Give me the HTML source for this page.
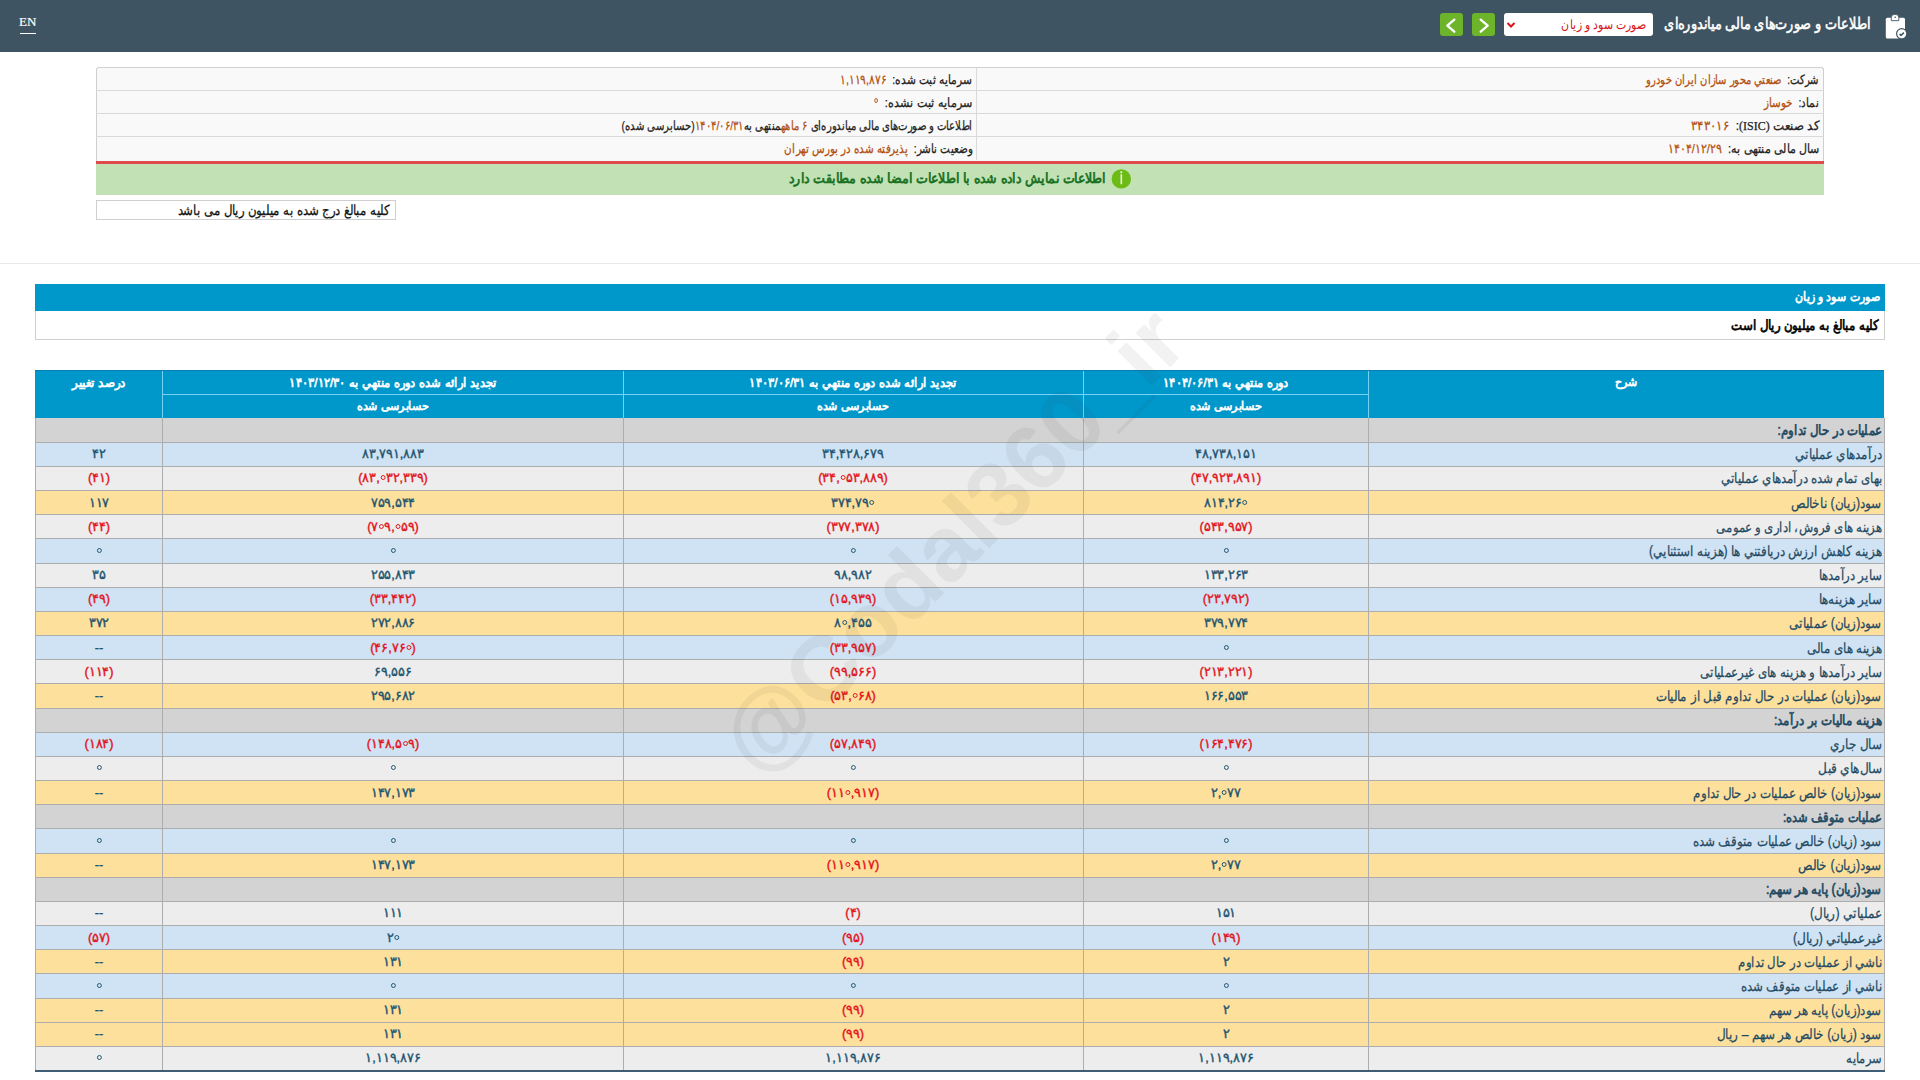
<!DOCTYPE html>
<html lang="fa"><head><meta charset="utf-8"><title>Codal</title>
<style>
html,body{margin:0;padding:0;}
body{width:1920px;height:1080px;position:relative;overflow:hidden;background:#fff;font-family:"Liberation Sans",sans-serif;}
.a{position:absolute;box-sizing:border-box;}
.t{position:absolute;white-space:nowrap;direction:rtl;}
.bd{-webkit-text-stroke:0.7px currentColor;}
.rg{-webkit-text-stroke:0.25px currentColor;}
.o{color:#b3500f;}
.nm{-webkit-text-stroke:0.4px currentColor;direction:ltr;}
.z{display:inline-block;width:5px;height:5px;box-sizing:border-box;border:1.9px solid currentColor;border-radius:50%;vertical-align:middle;position:relative;top:-1px;margin:0 0.6px;}
</style></head><body>

<div class="a" style="left:0;top:0;width:1920px;height:52px;background:#3e5462"></div>
<div class="a" style="left:19px;top:14px;font-family:'Liberation Serif',serif;font-size:13px;color:#fff;line-height:16px;-webkit-text-stroke:0.2px #fff">EN</div>
<div class="a" style="left:20px;top:33px;width:16px;height:1px;background:#fff"></div>
<svg class="a" style="left:1880px;top:10px" width="30" height="32" viewBox="0 0 30 32">
<rect x="5.8" y="7.7" width="19.2" height="20.8" rx="1.5" fill="#fff"/>
<path d="M11.3 10.7 V7.3 A3.75 3 0 0 1 18.8 7.3 V10.7 Z" fill="#fff" stroke="#3e5462" stroke-width="0.9"/>
<circle cx="15.2" cy="7.2" r="0.8" fill="#3e5462"/>
<circle cx="21.7" cy="23.7" r="5.7" fill="#3e5462"/>
<circle cx="21.7" cy="23.7" r="4.5" fill="#fff"/>
<path d="M19.6 24.0 L21.0 25.4 L23.9 22.6" stroke="#3e5462" stroke-width="1.5" fill="none"/>
</svg>
<div class="t bd" id="f1" style="right:50px;top:14px;height:20px;line-height:20px;font-size:15.6px;color:#fff;transform:scaleX(0.8008);transform-origin:100% 50%;-webkit-text-stroke:0.6px #fff;">اطلاعات و صورت‌های مالی میاندوره‌ای</div>
<div class="a" style="left:1504px;top:13px;width:149px;height:23px;background:#fff;border-radius:3px"></div>
<div class="t " id="f2" style="right:274px;top:14px;height:21px;line-height:21px;font-size:13.2px;color:#d7141a;transform:scaleX(0.8373);transform-origin:100% 50%;">صورت سود و زیان</div>
<svg class="a" style="left:1506px;top:19.5px" width="10" height="10" viewBox="0 0 10 10"><path d="M1.5 3 L5 6.5 L8.5 3" stroke="#d7141a" stroke-width="2" fill="none"/></svg>
<div class="a" style="left:1440px;top:13px;width:23px;height:23px;background:#6db42a;border-radius:3px"></div>
<svg class="a" style="left:1440px;top:13px" width="23" height="23" viewBox="0 0 23 23"><path d="M14.3 6.6 L7.3 12.6 L14.3 18.7" stroke="#fff" stroke-width="2.3" fill="none" stroke-linecap="round" stroke-linejoin="round"/></svg>
<div class="a" style="left:1472px;top:13px;width:23px;height:23px;background:#6db42a;border-radius:3px"></div>
<svg class="a" style="left:1472px;top:13px" width="23" height="23" viewBox="0 0 23 23"><path d="M8.7 6.6 L15.7 12.6 L8.7 18.7" stroke="#fff" stroke-width="2.3" fill="none" stroke-linecap="round" stroke-linejoin="round"/></svg>
<div class="a" style="left:96px;top:67px;width:1728px;height:94px;background:#f9f9f9;border:1px solid #cfcfcf;border-bottom:none;border-radius:3px 3px 0 0"></div>
<div class="a" style="left:96px;top:90px;width:1728px;height:1px;background:#d9d9d9"></div>
<div class="a" style="left:96px;top:113px;width:1728px;height:1px;background:#d9d9d9"></div>
<div class="a" style="left:96px;top:136px;width:1728px;height:1px;background:#d9d9d9"></div>
<div class="a" style="left:976px;top:67px;width:1px;height:93px;background:#d9d9d9"></div>
<div class="a" style="left:96px;top:161px;width:1728px;height:3px;background:#e04a4a"></div>
<div class="a" style="left:96px;top:164px;width:1728px;height:31px;background:#c2e2b6"></div>
<div class="t rg" id="f3" style="right:101px;top:69px;height:22px;line-height:22px;font-size:13.2px;color:#222;transform:scaleX(0.7699);transform-origin:100% 50%;">شرکت:&nbsp; <span class="o">صنعتي محور سازان ايران خودرو</span></div>
<div class="t rg" id="f4" style="right:101px;top:92px;height:22px;line-height:22px;font-size:13.2px;color:#222;transform:scaleX(0.8000);transform-origin:100% 50%;">نماد:&nbsp; <span class="o">خوساز</span></div>
<div class="t rg" id="f5" style="right:101px;top:115px;height:22px;line-height:22px;font-size:13.2px;color:#222;transform:scaleX(0.9078);transform-origin:100% 50%;">کد صنعت <span style="font-family:'Liberation Serif',serif">(ISIC)</span>:&nbsp; <span class="o">۳۴۳۰۱۶</span></div>
<div class="t rg" id="f6" style="right:101px;top:138px;height:22px;line-height:22px;font-size:13.2px;color:#222;transform:scaleX(0.8481);transform-origin:100% 50%;">سال مالی منتهی به:&nbsp; <span class="o">۱۴۰۴/۱۲/۲۹</span></div>
<div class="t rg" id="f7" style="right:948px;top:69px;height:22px;line-height:22px;font-size:13.2px;color:#222;transform:scaleX(0.8184);transform-origin:100% 50%;">سرمایه ثبت شده:&nbsp; <span class="o">۱,۱۱۹,۸۷۶</span></div>
<div class="t rg" id="f8" style="right:948px;top:92px;height:22px;line-height:22px;font-size:13.2px;color:#222;transform:scaleX(0.8563);transform-origin:100% 50%;">سرمایه ثبت نشده:&nbsp; <span class="o"><span class="z" style="width:4.6px;height:4.6px;border-width:1.2px;top:-3px"></span></span></div>
<div class="t rg" id="f9" style="right:948px;top:115px;height:22px;line-height:22px;font-size:13.2px;color:#222;transform:scaleX(0.7758);transform-origin:100% 50%;">اطلاعات و صورت‌های مالی میاندوره‌ای <span class="o">۶ ماهه</span>منتهی به<span class="o">۱۴۰۴/۰۶/۳۱</span>(حسابرسی شده)</div>
<div class="t rg" id="f10" style="right:948px;top:138px;height:22px;line-height:22px;font-size:13.2px;color:#222;transform:scaleX(0.7983);transform-origin:100% 50%;">وضعیت ناشر:&nbsp; <span class="o">پذیرفته شده در بورس تهران</span></div>
<div class="t bd" id="f11" style="right:814px;top:167.5px;height:20px;line-height:20px;font-size:14.4px;color:#17701f;transform:scaleX(0.9006);transform-origin:100% 50%;">اطلاعات نمایش داده شده با اطلاعات امضا شده مطابقت دارد</div>
<svg class="a" style="left:1111px;top:168px" width="21" height="21" viewBox="0 0 21 21"><circle cx="10.3" cy="10.9" r="9.7" fill="#6cbb17"/><rect x="9.4" y="3.3" width="1.8" height="1.8" fill="#e8f8d8"/><rect x="9.5" y="6.2" width="1.6" height="10" fill="#e8f8d8"/></svg>
<div class="a" style="left:96px;top:200px;width:300px;height:20px;background:#fff;border:1px solid #cfcfcf"></div>
<div class="t rg" id="f12" style="right:1530px;top:201px;height:19px;line-height:19px;font-size:14.4px;color:#111;transform:scaleX(0.8399);transform-origin:100% 50%;">کلیه مبالغ درج شده به میلیون ریال می باشد</div>
<div class="a" style="left:0;top:263px;width:1920px;height:1px;background:#eaeaea"></div>
<div class="a" style="left:35px;top:284px;width:1850px;height:27px;background:#0097ca"></div>
<div class="t bd" id="f13" style="right:40px;top:287px;height:20px;line-height:20px;font-size:13.2px;color:#fff;transform:scaleX(0.8431);transform-origin:100% 50%;">صورت سود و زیان</div>
<div class="a" style="left:35px;top:311px;width:1850px;height:29px;background:#fff;border:1px solid #cfcfcf;border-top:none"></div>
<div class="t bd" id="f14" style="right:41px;top:315px;height:20px;line-height:20px;font-size:14.4px;color:#000;transform:scaleX(0.8409);transform-origin:100% 50%;">کليه مبالغ به ميليون ريال است</div>
<div class="a" style="left:35px;top:370px;width:1849px;height:48px;background:#0097ca;border-top:1px solid #0a7fae"></div>
<div class="a" style="left:162px;top:371px;width:1px;height:47px;background:#74d3f3"></div>
<div class="a" style="left:623px;top:371px;width:1px;height:47px;background:#74d3f3"></div>
<div class="a" style="left:1083px;top:371px;width:1px;height:47px;background:#74d3f3"></div>
<div class="a" style="left:1368px;top:371px;width:1px;height:47px;background:#74d3f3"></div>
<div class="a" style="left:162px;top:394px;width:1206px;height:1px;background:#74d3f3"></div>
<div class="t bd" id="f15" style="left:1626.0px;top:371px;height:23px;line-height:23px;font-size:12.1px;color:#fff;transform:translateX(-50%) scaleX(0.9200);transform-origin:50% 50%;">شرح</div>
<div class="t bd" id="f16" style="left:1225.5px;top:371px;height:23px;line-height:23px;font-size:13.2px;color:#fff;transform:translateX(-50%) scaleX(0.8819);transform-origin:50% 50%;">دوره منتهي به ۱۴۰۴/۰۶/۳۱</div>
<div class="t bd" id="f17" style="left:853.0px;top:371px;height:23px;line-height:23px;font-size:13.2px;color:#fff;transform:translateX(-50%) scaleX(0.8877);transform-origin:50% 50%;">تجدید ارائه شده دوره منتهي به ۱۴۰۳/۰۶/۳۱</div>
<div class="t bd" id="f18" style="left:392.5px;top:371px;height:23px;line-height:23px;font-size:13.2px;color:#fff;transform:translateX(-50%) scaleX(0.8881);transform-origin:50% 50%;">تجدید ارائه شده دوره منتهي به ۱۴۰۳/۱۲/۳۰</div>
<div class="t bd" id="f19" style="left:98.5px;top:371px;height:23px;line-height:23px;font-size:13.2px;color:#fff;transform:translateX(-50%) scaleX(0.9153);transform-origin:50% 50%;">درصد تغییر</div>
<div class="t bd" id="f20" style="left:392.5px;top:395px;height:23px;line-height:23px;font-size:12.1px;color:#fff;transform:translateX(-50%) scaleX(0.9286);transform-origin:50% 50%;">حسابرسی شده</div>
<div class="t bd" id="f21" style="left:853.0px;top:395px;height:23px;line-height:23px;font-size:12.1px;color:#fff;transform:translateX(-50%) scaleX(0.9286);transform-origin:50% 50%;">حسابرسی شده</div>
<div class="t bd" id="f22" style="left:1225.5px;top:395px;height:23px;line-height:23px;font-size:12.1px;color:#fff;transform:translateX(-50%) scaleX(0.9286);transform-origin:50% 50%;">حسابرسی شده</div>
<div class="a" style="left:35px;top:418px;width:1849px;height:24px;background:#d3d3d3"></div>
<div class="a" style="left:35px;top:442px;width:1849px;height:24px;background:#d0e3f4"></div>
<div class="a" style="left:35px;top:466px;width:1849px;height:25px;background:#ededed"></div>
<div class="a" style="left:35px;top:491px;width:1849px;height:24px;background:#fde09c"></div>
<div class="a" style="left:35px;top:515px;width:1849px;height:24px;background:#ededed"></div>
<div class="a" style="left:35px;top:539px;width:1849px;height:24px;background:#d0e3f4"></div>
<div class="a" style="left:35px;top:563px;width:1849px;height:24px;background:#ededed"></div>
<div class="a" style="left:35px;top:587px;width:1849px;height:24px;background:#d0e3f4"></div>
<div class="a" style="left:35px;top:611px;width:1849px;height:25px;background:#fde09c"></div>
<div class="a" style="left:35px;top:636px;width:1849px;height:24px;background:#d0e3f4"></div>
<div class="a" style="left:35px;top:660px;width:1849px;height:24px;background:#ededed"></div>
<div class="a" style="left:35px;top:684px;width:1849px;height:24px;background:#fde09c"></div>
<div class="a" style="left:35px;top:708px;width:1849px;height:24px;background:#d3d3d3"></div>
<div class="a" style="left:35px;top:732px;width:1849px;height:24px;background:#d0e3f4"></div>
<div class="a" style="left:35px;top:756px;width:1849px;height:25px;background:#ededed"></div>
<div class="a" style="left:35px;top:781px;width:1849px;height:24px;background:#fde09c"></div>
<div class="a" style="left:35px;top:805px;width:1849px;height:24px;background:#d3d3d3"></div>
<div class="a" style="left:35px;top:829px;width:1849px;height:24px;background:#d0e3f4"></div>
<div class="a" style="left:35px;top:853px;width:1849px;height:24px;background:#fde09c"></div>
<div class="a" style="left:35px;top:877px;width:1849px;height:24px;background:#d3d3d3"></div>
<div class="a" style="left:35px;top:901px;width:1849px;height:25px;background:#ededed"></div>
<div class="a" style="left:35px;top:926px;width:1849px;height:24px;background:#d0e3f4"></div>
<div class="a" style="left:35px;top:950px;width:1849px;height:24px;background:#fde09c"></div>
<div class="a" style="left:35px;top:974px;width:1849px;height:24px;background:#d0e3f4"></div>
<div class="a" style="left:35px;top:998px;width:1849px;height:24px;background:#fde09c"></div>
<div class="a" style="left:35px;top:1022px;width:1849px;height:24px;background:#fde09c"></div>
<div class="a" style="left:35px;top:1046px;width:1849px;height:25px;background:#ededed"></div>
<div class="a" style="left:35px;top:442px;width:1849px;height:1px;background:#adadad"></div>
<div class="a" style="left:35px;top:466px;width:1849px;height:1px;background:#adadad"></div>
<div class="a" style="left:35px;top:490px;width:1849px;height:1px;background:#adadad"></div>
<div class="a" style="left:35px;top:514px;width:1849px;height:1px;background:#adadad"></div>
<div class="a" style="left:35px;top:538px;width:1849px;height:1px;background:#adadad"></div>
<div class="a" style="left:35px;top:563px;width:1849px;height:1px;background:#adadad"></div>
<div class="a" style="left:35px;top:587px;width:1849px;height:1px;background:#adadad"></div>
<div class="a" style="left:35px;top:611px;width:1849px;height:1px;background:#adadad"></div>
<div class="a" style="left:35px;top:635px;width:1849px;height:1px;background:#adadad"></div>
<div class="a" style="left:35px;top:659px;width:1849px;height:1px;background:#adadad"></div>
<div class="a" style="left:35px;top:683px;width:1849px;height:1px;background:#adadad"></div>
<div class="a" style="left:35px;top:708px;width:1849px;height:1px;background:#adadad"></div>
<div class="a" style="left:35px;top:732px;width:1849px;height:1px;background:#adadad"></div>
<div class="a" style="left:35px;top:756px;width:1849px;height:1px;background:#adadad"></div>
<div class="a" style="left:35px;top:780px;width:1849px;height:1px;background:#adadad"></div>
<div class="a" style="left:35px;top:804px;width:1849px;height:1px;background:#adadad"></div>
<div class="a" style="left:35px;top:828px;width:1849px;height:1px;background:#adadad"></div>
<div class="a" style="left:35px;top:853px;width:1849px;height:1px;background:#adadad"></div>
<div class="a" style="left:35px;top:877px;width:1849px;height:1px;background:#adadad"></div>
<div class="a" style="left:35px;top:901px;width:1849px;height:1px;background:#adadad"></div>
<div class="a" style="left:35px;top:925px;width:1849px;height:1px;background:#adadad"></div>
<div class="a" style="left:35px;top:949px;width:1849px;height:1px;background:#adadad"></div>
<div class="a" style="left:35px;top:973px;width:1849px;height:1px;background:#adadad"></div>
<div class="a" style="left:35px;top:998px;width:1849px;height:1px;background:#adadad"></div>
<div class="a" style="left:35px;top:1022px;width:1849px;height:1px;background:#adadad"></div>
<div class="a" style="left:35px;top:1046px;width:1849px;height:1px;background:#adadad"></div>
<div class="a" style="left:35px;top:418px;width:1px;height:652px;background:#adadad"></div>
<div class="a" style="left:162px;top:418px;width:1px;height:652px;background:#adadad"></div>
<div class="a" style="left:623px;top:418px;width:1px;height:652px;background:#adadad"></div>
<div class="a" style="left:1083px;top:418px;width:1px;height:652px;background:#adadad"></div>
<div class="a" style="left:1368px;top:418px;width:1px;height:652px;background:#adadad"></div>
<div class="a" style="left:1884px;top:418px;width:1px;height:652px;background:#adadad"></div>
<div class="a" style="left:35px;top:1069.5px;width:1850px;height:2px;background:#3f5d74"></div>
<div class="t bd" id="f23" style="right:38px;top:418.0px;height:24.17px;line-height:24.17px;font-size:14.4px;color:#1f4a63;transform:scaleX(0.8360);transform-origin:100% 50%;">عمليات در حال تداوم:</div>
<div class="t rg" id="f24" style="right:38px;top:442.17px;height:24.17px;line-height:24.17px;font-size:14.4px;color:#1f4a63;transform:scaleX(0.8447);transform-origin:100% 50%;">درآمدهاي عملياتي</div>
<div class="t nm" id="f25" style="left:1225.5px;top:442.17px;height:24.17px;line-height:24.17px;font-size:13.0px;color:#1d5470;transform:translateX(-50%) scaleX(0.9800);transform-origin:50% 50%;">۴۸,۷۳۸,۱۵۱</div>
<div class="t nm" id="f26" style="left:853.0px;top:442.17px;height:24.17px;line-height:24.17px;font-size:13.0px;color:#1d5470;transform:translateX(-50%) scaleX(0.9800);transform-origin:50% 50%;">۳۴,۴۲۸,۶۷۹</div>
<div class="t nm" id="f27" style="left:392.5px;top:442.17px;height:24.17px;line-height:24.17px;font-size:13.0px;color:#1d5470;transform:translateX(-50%) scaleX(0.9800);transform-origin:50% 50%;">۸۳,۷۹۱,۸۸۳</div>
<div class="t nm" id="f28" style="left:98.5px;top:442.17px;height:24.17px;line-height:24.17px;font-size:13.0px;color:#1d5470;transform:translateX(-50%) scaleX(0.9800);transform-origin:50% 50%;">۴۲</div>
<div class="t rg" id="f29" style="right:38px;top:466.34px;height:24.17px;line-height:24.17px;font-size:14.4px;color:#1f4a63;transform:scaleX(0.8429);transform-origin:100% 50%;">بهاى تمام شده درآمدهاي عملياتي</div>
<div class="t nm" id="f30" style="left:1225.5px;top:466.34px;height:24.17px;line-height:24.17px;font-size:13.0px;color:#e3141b;transform:translateX(-50%) scaleX(0.9800);transform-origin:50% 50%;">(۴۷,۹۲۳,۸۹۱)</div>
<div class="t nm" id="f31" style="left:853.0px;top:466.34px;height:24.17px;line-height:24.17px;font-size:13.0px;color:#e3141b;transform:translateX(-50%) scaleX(0.9800);transform-origin:50% 50%;">(۳۴,<span class="z"></span>۵۳,۸۸۹)</div>
<div class="t nm" id="f32" style="left:392.5px;top:466.34px;height:24.17px;line-height:24.17px;font-size:13.0px;color:#e3141b;transform:translateX(-50%) scaleX(0.9800);transform-origin:50% 50%;">(۸۳,<span class="z"></span>۳۲,۳۳۹)</div>
<div class="t nm" id="f33" style="left:98.5px;top:466.34px;height:24.17px;line-height:24.17px;font-size:13.0px;color:#e3141b;transform:translateX(-50%) scaleX(0.9800);transform-origin:50% 50%;">(۴۱)</div>
<div class="t rg" id="f34" style="right:38px;top:490.51px;height:24.17px;line-height:24.17px;font-size:14.4px;color:#1f4a63;transform:scaleX(0.8585);transform-origin:100% 50%;">سود(زيان) ناخالص</div>
<div class="t nm" id="f35" style="left:1225.5px;top:490.51px;height:24.17px;line-height:24.17px;font-size:13.0px;color:#1d5470;transform:translateX(-50%) scaleX(0.9800);transform-origin:50% 50%;">۸۱۴,۲۶<span class="z"></span></div>
<div class="t nm" id="f36" style="left:853.0px;top:490.51px;height:24.17px;line-height:24.17px;font-size:13.0px;color:#1d5470;transform:translateX(-50%) scaleX(0.9800);transform-origin:50% 50%;">۳۷۴,۷۹<span class="z"></span></div>
<div class="t nm" id="f37" style="left:392.5px;top:490.51px;height:24.17px;line-height:24.17px;font-size:13.0px;color:#1d5470;transform:translateX(-50%) scaleX(0.9800);transform-origin:50% 50%;">۷۵۹,۵۴۴</div>
<div class="t nm" id="f38" style="left:98.5px;top:490.51px;height:24.17px;line-height:24.17px;font-size:13.0px;color:#1d5470;transform:translateX(-50%) scaleX(0.9800);transform-origin:50% 50%;">۱۱۷</div>
<div class="t rg" id="f39" style="right:38px;top:514.68px;height:24.17px;line-height:24.17px;font-size:14.4px;color:#1f4a63;transform:scaleX(0.8342);transform-origin:100% 50%;">هزينه هاى فروش، ادارى و عمومى</div>
<div class="t nm" id="f40" style="left:1225.5px;top:514.68px;height:24.17px;line-height:24.17px;font-size:13.0px;color:#e3141b;transform:translateX(-50%) scaleX(0.9800);transform-origin:50% 50%;">(۵۴۳,۹۵۷)</div>
<div class="t nm" id="f41" style="left:853.0px;top:514.68px;height:24.17px;line-height:24.17px;font-size:13.0px;color:#e3141b;transform:translateX(-50%) scaleX(0.9800);transform-origin:50% 50%;">(۳۷۷,۳۷۸)</div>
<div class="t nm" id="f42" style="left:392.5px;top:514.68px;height:24.17px;line-height:24.17px;font-size:13.0px;color:#e3141b;transform:translateX(-50%) scaleX(0.9800);transform-origin:50% 50%;">(۷<span class="z"></span>۹,<span class="z"></span>۵۹)</div>
<div class="t nm" id="f43" style="left:98.5px;top:514.68px;height:24.17px;line-height:24.17px;font-size:13.0px;color:#e3141b;transform:translateX(-50%) scaleX(0.9800);transform-origin:50% 50%;">(۴۴)</div>
<div class="t rg" id="f44" style="right:38px;top:538.85px;height:24.17px;line-height:24.17px;font-size:14.4px;color:#1f4a63;transform:scaleX(0.8504);transform-origin:100% 50%;">هزينه کاهش ارزش دريافتني ها (هزينه استثنايي)</div>
<div class="t nm" id="f45" style="left:1225.5px;top:538.85px;height:24.17px;line-height:24.17px;font-size:13.0px;color:#1d5470;transform:translateX(-50%) scaleX(0.9800);transform-origin:50% 50%;"><span class="z"></span></div>
<div class="t nm" id="f46" style="left:853.0px;top:538.85px;height:24.17px;line-height:24.17px;font-size:13.0px;color:#1d5470;transform:translateX(-50%) scaleX(0.9800);transform-origin:50% 50%;"><span class="z"></span></div>
<div class="t nm" id="f47" style="left:392.5px;top:538.85px;height:24.17px;line-height:24.17px;font-size:13.0px;color:#1d5470;transform:translateX(-50%) scaleX(0.9800);transform-origin:50% 50%;"><span class="z"></span></div>
<div class="t nm" id="f48" style="left:98.5px;top:538.85px;height:24.17px;line-height:24.17px;font-size:13.0px;color:#1d5470;transform:translateX(-50%) scaleX(0.9800);transform-origin:50% 50%;"><span class="z"></span></div>
<div class="t rg" id="f49" style="right:38px;top:563.02px;height:24.17px;line-height:24.17px;font-size:14.4px;color:#1f4a63;transform:scaleX(0.8400);transform-origin:100% 50%;">ساير درآمدها</div>
<div class="t nm" id="f50" style="left:1225.5px;top:563.02px;height:24.17px;line-height:24.17px;font-size:13.0px;color:#1d5470;transform:translateX(-50%) scaleX(0.9800);transform-origin:50% 50%;">۱۳۳,۲۶۳</div>
<div class="t nm" id="f51" style="left:853.0px;top:563.02px;height:24.17px;line-height:24.17px;font-size:13.0px;color:#1d5470;transform:translateX(-50%) scaleX(0.9800);transform-origin:50% 50%;">۹۸,۹۸۲</div>
<div class="t nm" id="f52" style="left:392.5px;top:563.02px;height:24.17px;line-height:24.17px;font-size:13.0px;color:#1d5470;transform:translateX(-50%) scaleX(0.9800);transform-origin:50% 50%;">۲۵۵,۸۴۳</div>
<div class="t nm" id="f53" style="left:98.5px;top:563.02px;height:24.17px;line-height:24.17px;font-size:13.0px;color:#1d5470;transform:translateX(-50%) scaleX(0.9800);transform-origin:50% 50%;">۳۵</div>
<div class="t rg" id="f54" style="right:38px;top:587.19px;height:24.17px;line-height:24.17px;font-size:14.4px;color:#1f4a63;transform:scaleX(0.8514);transform-origin:100% 50%;">ساير هزينه‌ها</div>
<div class="t nm" id="f55" style="left:1225.5px;top:587.19px;height:24.17px;line-height:24.17px;font-size:13.0px;color:#e3141b;transform:translateX(-50%) scaleX(0.9800);transform-origin:50% 50%;">(۲۳,۷۹۲)</div>
<div class="t nm" id="f56" style="left:853.0px;top:587.19px;height:24.17px;line-height:24.17px;font-size:13.0px;color:#e3141b;transform:translateX(-50%) scaleX(0.9800);transform-origin:50% 50%;">(۱۵,۹۳۹)</div>
<div class="t nm" id="f57" style="left:392.5px;top:587.19px;height:24.17px;line-height:24.17px;font-size:13.0px;color:#e3141b;transform:translateX(-50%) scaleX(0.9800);transform-origin:50% 50%;">(۳۳,۴۴۲)</div>
<div class="t nm" id="f58" style="left:98.5px;top:587.19px;height:24.17px;line-height:24.17px;font-size:13.0px;color:#e3141b;transform:translateX(-50%) scaleX(0.9800);transform-origin:50% 50%;">(۴۹)</div>
<div class="t rg" id="f59" style="right:38px;top:611.36px;height:24.17px;line-height:24.17px;font-size:14.4px;color:#1f4a63;transform:scaleX(0.8532);transform-origin:100% 50%;">سود(زيان) عملياتى</div>
<div class="t nm" id="f60" style="left:1225.5px;top:611.36px;height:24.17px;line-height:24.17px;font-size:13.0px;color:#1d5470;transform:translateX(-50%) scaleX(0.9800);transform-origin:50% 50%;">۳۷۹,۷۷۴</div>
<div class="t nm" id="f61" style="left:853.0px;top:611.36px;height:24.17px;line-height:24.17px;font-size:13.0px;color:#1d5470;transform:translateX(-50%) scaleX(0.9800);transform-origin:50% 50%;">۸<span class="z"></span>,۴۵۵</div>
<div class="t nm" id="f62" style="left:392.5px;top:611.36px;height:24.17px;line-height:24.17px;font-size:13.0px;color:#1d5470;transform:translateX(-50%) scaleX(0.9800);transform-origin:50% 50%;">۲۷۲,۸۸۶</div>
<div class="t nm" id="f63" style="left:98.5px;top:611.36px;height:24.17px;line-height:24.17px;font-size:13.0px;color:#1d5470;transform:translateX(-50%) scaleX(0.9800);transform-origin:50% 50%;">۳۷۲</div>
<div class="t rg" id="f64" style="right:38px;top:635.53px;height:24.17px;line-height:24.17px;font-size:14.4px;color:#1f4a63;transform:scaleX(0.8427);transform-origin:100% 50%;">هزينه هاى مالى</div>
<div class="t nm" id="f65" style="left:1225.5px;top:635.53px;height:24.17px;line-height:24.17px;font-size:13.0px;color:#1d5470;transform:translateX(-50%) scaleX(0.9800);transform-origin:50% 50%;"><span class="z"></span></div>
<div class="t nm" id="f66" style="left:853.0px;top:635.53px;height:24.17px;line-height:24.17px;font-size:13.0px;color:#e3141b;transform:translateX(-50%) scaleX(0.9800);transform-origin:50% 50%;">(۳۳,۹۵۷)</div>
<div class="t nm" id="f67" style="left:392.5px;top:635.53px;height:24.17px;line-height:24.17px;font-size:13.0px;color:#e3141b;transform:translateX(-50%) scaleX(0.9800);transform-origin:50% 50%;">(۴۶,۷۶<span class="z"></span>)</div>
<div class="t nm" id="f68" style="left:98.5px;top:635.53px;height:24.17px;line-height:24.17px;font-size:13.0px;color:#1d5470;transform:translateX(-50%) scaleX(0.9800);transform-origin:50% 50%;">--</div>
<div class="t rg" id="f69" style="right:38px;top:659.7px;height:24.17px;line-height:24.17px;font-size:14.4px;color:#1f4a63;transform:scaleX(0.8465);transform-origin:100% 50%;">ساير درآمدها و هزينه هاى غيرعملياتى</div>
<div class="t nm" id="f70" style="left:1225.5px;top:659.7px;height:24.17px;line-height:24.17px;font-size:13.0px;color:#e3141b;transform:translateX(-50%) scaleX(0.9800);transform-origin:50% 50%;">(۲۱۳,۲۲۱)</div>
<div class="t nm" id="f71" style="left:853.0px;top:659.7px;height:24.17px;line-height:24.17px;font-size:13.0px;color:#e3141b;transform:translateX(-50%) scaleX(0.9800);transform-origin:50% 50%;">(۹۹,۵۶۶)</div>
<div class="t nm" id="f72" style="left:392.5px;top:659.7px;height:24.17px;line-height:24.17px;font-size:13.0px;color:#1d5470;transform:translateX(-50%) scaleX(0.9800);transform-origin:50% 50%;">۶۹,۵۵۶</div>
<div class="t nm" id="f73" style="left:98.5px;top:659.7px;height:24.17px;line-height:24.17px;font-size:13.0px;color:#e3141b;transform:translateX(-50%) scaleX(0.9800);transform-origin:50% 50%;">(۱۱۴)</div>
<div class="t rg" id="f74" style="right:38px;top:683.87px;height:24.17px;line-height:24.17px;font-size:14.4px;color:#1f4a63;transform:scaleX(0.8464);transform-origin:100% 50%;">سود(زيان) عمليات در حال تداوم قبل از ماليات</div>
<div class="t nm" id="f75" style="left:1225.5px;top:683.87px;height:24.17px;line-height:24.17px;font-size:13.0px;color:#1d5470;transform:translateX(-50%) scaleX(0.9800);transform-origin:50% 50%;">۱۶۶,۵۵۳</div>
<div class="t nm" id="f76" style="left:853.0px;top:683.87px;height:24.17px;line-height:24.17px;font-size:13.0px;color:#e3141b;transform:translateX(-50%) scaleX(0.9800);transform-origin:50% 50%;">(۵۳,<span class="z"></span>۶۸)</div>
<div class="t nm" id="f77" style="left:392.5px;top:683.87px;height:24.17px;line-height:24.17px;font-size:13.0px;color:#1d5470;transform:translateX(-50%) scaleX(0.9800);transform-origin:50% 50%;">۲۹۵,۶۸۲</div>
<div class="t nm" id="f78" style="left:98.5px;top:683.87px;height:24.17px;line-height:24.17px;font-size:13.0px;color:#1d5470;transform:translateX(-50%) scaleX(0.9800);transform-origin:50% 50%;">--</div>
<div class="t bd" id="f79" style="right:38px;top:708.04px;height:24.17px;line-height:24.17px;font-size:14.4px;color:#1f4a63;transform:scaleX(0.8438);transform-origin:100% 50%;">هزينه ماليات بر درآمد:</div>
<div class="t rg" id="f80" style="right:38px;top:732.21px;height:24.17px;line-height:24.17px;font-size:14.4px;color:#1f4a63;transform:scaleX(0.8525);transform-origin:100% 50%;">سال جاري</div>
<div class="t nm" id="f81" style="left:1225.5px;top:732.21px;height:24.17px;line-height:24.17px;font-size:13.0px;color:#e3141b;transform:translateX(-50%) scaleX(0.9800);transform-origin:50% 50%;">(۱۶۴,۴۷۶)</div>
<div class="t nm" id="f82" style="left:853.0px;top:732.21px;height:24.17px;line-height:24.17px;font-size:13.0px;color:#e3141b;transform:translateX(-50%) scaleX(0.9800);transform-origin:50% 50%;">(۵۷,۸۴۹)</div>
<div class="t nm" id="f83" style="left:392.5px;top:732.21px;height:24.17px;line-height:24.17px;font-size:13.0px;color:#e3141b;transform:translateX(-50%) scaleX(0.9800);transform-origin:50% 50%;">(۱۴۸,۵<span class="z"></span>۹)</div>
<div class="t nm" id="f84" style="left:98.5px;top:732.21px;height:24.17px;line-height:24.17px;font-size:13.0px;color:#e3141b;transform:translateX(-50%) scaleX(0.9800);transform-origin:50% 50%;">(۱۸۴)</div>
<div class="t rg" id="f85" style="right:38px;top:756.38px;height:24.17px;line-height:24.17px;font-size:14.4px;color:#1f4a63;transform:scaleX(0.8649);transform-origin:100% 50%;">سال‌هاي قبل</div>
<div class="t nm" id="f86" style="left:1225.5px;top:756.38px;height:24.17px;line-height:24.17px;font-size:13.0px;color:#1d5470;transform:translateX(-50%) scaleX(0.9800);transform-origin:50% 50%;"><span class="z"></span></div>
<div class="t nm" id="f87" style="left:853.0px;top:756.38px;height:24.17px;line-height:24.17px;font-size:13.0px;color:#1d5470;transform:translateX(-50%) scaleX(0.9800);transform-origin:50% 50%;"><span class="z"></span></div>
<div class="t nm" id="f88" style="left:392.5px;top:756.38px;height:24.17px;line-height:24.17px;font-size:13.0px;color:#1d5470;transform:translateX(-50%) scaleX(0.9800);transform-origin:50% 50%;"><span class="z"></span></div>
<div class="t nm" id="f89" style="left:98.5px;top:756.38px;height:24.17px;line-height:24.17px;font-size:13.0px;color:#1d5470;transform:translateX(-50%) scaleX(0.9800);transform-origin:50% 50%;"><span class="z"></span></div>
<div class="t rg" id="f90" style="right:38px;top:780.55px;height:24.17px;line-height:24.17px;font-size:14.4px;color:#1f4a63;transform:scaleX(0.8475);transform-origin:100% 50%;">سود(زيان) خالص عمليات در حال تداوم</div>
<div class="t nm" id="f91" style="left:1225.5px;top:780.55px;height:24.17px;line-height:24.17px;font-size:13.0px;color:#1d5470;transform:translateX(-50%) scaleX(0.9800);transform-origin:50% 50%;">۲,<span class="z"></span>۷۷</div>
<div class="t nm" id="f92" style="left:853.0px;top:780.55px;height:24.17px;line-height:24.17px;font-size:13.0px;color:#e3141b;transform:translateX(-50%) scaleX(0.9800);transform-origin:50% 50%;">(۱۱<span class="z"></span>,۹۱۷)</div>
<div class="t nm" id="f93" style="left:392.5px;top:780.55px;height:24.17px;line-height:24.17px;font-size:13.0px;color:#1d5470;transform:translateX(-50%) scaleX(0.9800);transform-origin:50% 50%;">۱۴۷,۱۷۳</div>
<div class="t nm" id="f94" style="left:98.5px;top:780.55px;height:24.17px;line-height:24.17px;font-size:13.0px;color:#1d5470;transform:translateX(-50%) scaleX(0.9800);transform-origin:50% 50%;">--</div>
<div class="t bd" id="f95" style="right:38px;top:804.72px;height:24.17px;line-height:24.17px;font-size:14.4px;color:#1f4a63;transform:scaleX(0.8182);transform-origin:100% 50%;">عمليات متوقف شده:</div>
<div class="t rg" id="f96" style="right:38px;top:828.89px;height:24.17px;line-height:24.17px;font-size:14.4px;color:#1f4a63;transform:scaleX(0.8475);transform-origin:100% 50%;">سود (زيان) خالص عمليات متوقف شده</div>
<div class="t nm" id="f97" style="left:1225.5px;top:828.89px;height:24.17px;line-height:24.17px;font-size:13.0px;color:#1d5470;transform:translateX(-50%) scaleX(0.9800);transform-origin:50% 50%;"><span class="z"></span></div>
<div class="t nm" id="f98" style="left:853.0px;top:828.89px;height:24.17px;line-height:24.17px;font-size:13.0px;color:#1d5470;transform:translateX(-50%) scaleX(0.9800);transform-origin:50% 50%;"><span class="z"></span></div>
<div class="t nm" id="f99" style="left:392.5px;top:828.89px;height:24.17px;line-height:24.17px;font-size:13.0px;color:#1d5470;transform:translateX(-50%) scaleX(0.9800);transform-origin:50% 50%;"><span class="z"></span></div>
<div class="t nm" id="f100" style="left:98.5px;top:828.89px;height:24.17px;line-height:24.17px;font-size:13.0px;color:#1d5470;transform:translateX(-50%) scaleX(0.9800);transform-origin:50% 50%;"><span class="z"></span></div>
<div class="t rg" id="f101" style="right:38px;top:853.06px;height:24.17px;line-height:24.17px;font-size:14.4px;color:#1f4a63;transform:scaleX(0.8571);transform-origin:100% 50%;">سود(زيان) خالص</div>
<div class="t nm" id="f102" style="left:1225.5px;top:853.06px;height:24.17px;line-height:24.17px;font-size:13.0px;color:#1d5470;transform:translateX(-50%) scaleX(0.9800);transform-origin:50% 50%;">۲,<span class="z"></span>۷۷</div>
<div class="t nm" id="f103" style="left:853.0px;top:853.06px;height:24.17px;line-height:24.17px;font-size:13.0px;color:#e3141b;transform:translateX(-50%) scaleX(0.9800);transform-origin:50% 50%;">(۱۱<span class="z"></span>,۹۱۷)</div>
<div class="t nm" id="f104" style="left:392.5px;top:853.06px;height:24.17px;line-height:24.17px;font-size:13.0px;color:#1d5470;transform:translateX(-50%) scaleX(0.9800);transform-origin:50% 50%;">۱۴۷,۱۷۳</div>
<div class="t nm" id="f105" style="left:98.5px;top:853.06px;height:24.17px;line-height:24.17px;font-size:13.0px;color:#1d5470;transform:translateX(-50%) scaleX(0.9800);transform-origin:50% 50%;">--</div>
<div class="t bd" id="f106" style="right:38px;top:877.23px;height:24.17px;line-height:24.17px;font-size:14.4px;color:#1f4a63;transform:scaleX(0.8406);transform-origin:100% 50%;">سود(زيان) پايه هر سهم:</div>
<div class="t rg" id="f107" style="right:38px;top:901.4px;height:24.17px;line-height:24.17px;font-size:14.4px;color:#1f4a63;transform:scaleX(0.8571);transform-origin:100% 50%;">عملياتي (ريال)</div>
<div class="t nm" id="f108" style="left:1225.5px;top:901.4px;height:24.17px;line-height:24.17px;font-size:13.0px;color:#1d5470;transform:translateX(-50%) scaleX(0.9800);transform-origin:50% 50%;">۱۵۱</div>
<div class="t nm" id="f109" style="left:853.0px;top:901.4px;height:24.17px;line-height:24.17px;font-size:13.0px;color:#e3141b;transform:translateX(-50%) scaleX(0.9800);transform-origin:50% 50%;">(۴)</div>
<div class="t nm" id="f110" style="left:392.5px;top:901.4px;height:24.17px;line-height:24.17px;font-size:13.0px;color:#1d5470;transform:translateX(-50%) scaleX(0.9800);transform-origin:50% 50%;">۱۱۱</div>
<div class="t nm" id="f111" style="left:98.5px;top:901.4px;height:24.17px;line-height:24.17px;font-size:13.0px;color:#1d5470;transform:translateX(-50%) scaleX(0.9800);transform-origin:50% 50%;">--</div>
<div class="t rg" id="f112" style="right:38px;top:925.57px;height:24.17px;line-height:24.17px;font-size:14.4px;color:#1f4a63;transform:scaleX(0.8641);transform-origin:100% 50%;">غيرعملياتي (ريال)</div>
<div class="t nm" id="f113" style="left:1225.5px;top:925.57px;height:24.17px;line-height:24.17px;font-size:13.0px;color:#e3141b;transform:translateX(-50%) scaleX(0.9800);transform-origin:50% 50%;">(۱۴۹)</div>
<div class="t nm" id="f114" style="left:853.0px;top:925.57px;height:24.17px;line-height:24.17px;font-size:13.0px;color:#e3141b;transform:translateX(-50%) scaleX(0.9800);transform-origin:50% 50%;">(۹۵)</div>
<div class="t nm" id="f115" style="left:392.5px;top:925.57px;height:24.17px;line-height:24.17px;font-size:13.0px;color:#1d5470;transform:translateX(-50%) scaleX(0.9800);transform-origin:50% 50%;">۲<span class="z"></span></div>
<div class="t nm" id="f116" style="left:98.5px;top:925.57px;height:24.17px;line-height:24.17px;font-size:13.0px;color:#e3141b;transform:translateX(-50%) scaleX(0.9800);transform-origin:50% 50%;">(۵۷)</div>
<div class="t rg" id="f117" style="right:38px;top:949.74px;height:24.17px;line-height:24.17px;font-size:14.4px;color:#1f4a63;transform:scaleX(0.8372);transform-origin:100% 50%;">ناشي از عمليات در حال تداوم</div>
<div class="t nm" id="f118" style="left:1225.5px;top:949.74px;height:24.17px;line-height:24.17px;font-size:13.0px;color:#1d5470;transform:translateX(-50%) scaleX(0.9800);transform-origin:50% 50%;">۲</div>
<div class="t nm" id="f119" style="left:853.0px;top:949.74px;height:24.17px;line-height:24.17px;font-size:13.0px;color:#e3141b;transform:translateX(-50%) scaleX(0.9800);transform-origin:50% 50%;">(۹۹)</div>
<div class="t nm" id="f120" style="left:392.5px;top:949.74px;height:24.17px;line-height:24.17px;font-size:13.0px;color:#1d5470;transform:translateX(-50%) scaleX(0.9800);transform-origin:50% 50%;">۱۳۱</div>
<div class="t nm" id="f121" style="left:98.5px;top:949.74px;height:24.17px;line-height:24.17px;font-size:13.0px;color:#1d5470;transform:translateX(-50%) scaleX(0.9800);transform-origin:50% 50%;">--</div>
<div class="t rg" id="f122" style="right:38px;top:973.91px;height:24.17px;line-height:24.17px;font-size:14.4px;color:#1f4a63;transform:scaleX(0.8393);transform-origin:100% 50%;">ناشي از عمليات متوقف شده</div>
<div class="t nm" id="f123" style="left:1225.5px;top:973.91px;height:24.17px;line-height:24.17px;font-size:13.0px;color:#1d5470;transform:translateX(-50%) scaleX(0.9800);transform-origin:50% 50%;"><span class="z"></span></div>
<div class="t nm" id="f124" style="left:853.0px;top:973.91px;height:24.17px;line-height:24.17px;font-size:13.0px;color:#1d5470;transform:translateX(-50%) scaleX(0.9800);transform-origin:50% 50%;"><span class="z"></span></div>
<div class="t nm" id="f125" style="left:392.5px;top:973.91px;height:24.17px;line-height:24.17px;font-size:13.0px;color:#1d5470;transform:translateX(-50%) scaleX(0.9800);transform-origin:50% 50%;"><span class="z"></span></div>
<div class="t nm" id="f126" style="left:98.5px;top:973.91px;height:24.17px;line-height:24.17px;font-size:13.0px;color:#1d5470;transform:translateX(-50%) scaleX(0.9800);transform-origin:50% 50%;"><span class="z"></span></div>
<div class="t rg" id="f127" style="right:38px;top:998.08px;height:24.17px;line-height:24.17px;font-size:14.4px;color:#1f4a63;transform:scaleX(0.8433);transform-origin:100% 50%;">سود(زيان) پايه هر سهم</div>
<div class="t nm" id="f128" style="left:1225.5px;top:998.08px;height:24.17px;line-height:24.17px;font-size:13.0px;color:#1d5470;transform:translateX(-50%) scaleX(0.9800);transform-origin:50% 50%;">۲</div>
<div class="t nm" id="f129" style="left:853.0px;top:998.08px;height:24.17px;line-height:24.17px;font-size:13.0px;color:#e3141b;transform:translateX(-50%) scaleX(0.9800);transform-origin:50% 50%;">(۹۹)</div>
<div class="t nm" id="f130" style="left:392.5px;top:998.08px;height:24.17px;line-height:24.17px;font-size:13.0px;color:#1d5470;transform:translateX(-50%) scaleX(0.9800);transform-origin:50% 50%;">۱۳۱</div>
<div class="t nm" id="f131" style="left:98.5px;top:998.08px;height:24.17px;line-height:24.17px;font-size:13.0px;color:#1d5470;transform:translateX(-50%) scaleX(0.9800);transform-origin:50% 50%;">--</div>
<div class="t rg" id="f132" style="right:38px;top:1022.25px;height:24.17px;line-height:24.17px;font-size:14.4px;color:#1f4a63;transform:scaleX(0.8549);transform-origin:100% 50%;">سود (زيان) خالص هر سهم – ريال</div>
<div class="t nm" id="f133" style="left:1225.5px;top:1022.25px;height:24.17px;line-height:24.17px;font-size:13.0px;color:#1d5470;transform:translateX(-50%) scaleX(0.9800);transform-origin:50% 50%;">۲</div>
<div class="t nm" id="f134" style="left:853.0px;top:1022.25px;height:24.17px;line-height:24.17px;font-size:13.0px;color:#e3141b;transform:translateX(-50%) scaleX(0.9800);transform-origin:50% 50%;">(۹۹)</div>
<div class="t nm" id="f135" style="left:392.5px;top:1022.25px;height:24.17px;line-height:24.17px;font-size:13.0px;color:#1d5470;transform:translateX(-50%) scaleX(0.9800);transform-origin:50% 50%;">۱۳۱</div>
<div class="t nm" id="f136" style="left:98.5px;top:1022.25px;height:24.17px;line-height:24.17px;font-size:13.0px;color:#1d5470;transform:translateX(-50%) scaleX(0.9800);transform-origin:50% 50%;">--</div>
<div class="t rg" id="f137" style="right:38px;top:1046.42px;height:24.17px;line-height:24.17px;font-size:14.4px;color:#1f4a63;transform:scaleX(0.8182);transform-origin:100% 50%;">سرمايه</div>
<div class="t nm" id="f138" style="left:1225.5px;top:1046.42px;height:24.17px;line-height:24.17px;font-size:13.0px;color:#1d5470;transform:translateX(-50%) scaleX(0.9800);transform-origin:50% 50%;">۱,۱۱۹,۸۷۶</div>
<div class="t nm" id="f139" style="left:853.0px;top:1046.42px;height:24.17px;line-height:24.17px;font-size:13.0px;color:#1d5470;transform:translateX(-50%) scaleX(0.9800);transform-origin:50% 50%;">۱,۱۱۹,۸۷۶</div>
<div class="t nm" id="f140" style="left:392.5px;top:1046.42px;height:24.17px;line-height:24.17px;font-size:13.0px;color:#1d5470;transform:translateX(-50%) scaleX(0.9800);transform-origin:50% 50%;">۱,۱۱۹,۸۷۶</div>
<div class="t nm" id="f141" style="left:98.5px;top:1046.42px;height:24.17px;line-height:24.17px;font-size:13.0px;color:#1d5470;transform:translateX(-50%) scaleX(0.9800);transform-origin:50% 50%;"><span class="z"></span></div>
<div class="a" style="left:562px;top:490px;width:780px;height:100px;line-height:100px;text-align:center;font-size:92px;font-weight:bold;color:rgba(60,60,60,0.065);transform:rotate(-45deg);transform-origin:50% 50%;white-space:nowrap">@Codal360_ir</div>
</body></html>
